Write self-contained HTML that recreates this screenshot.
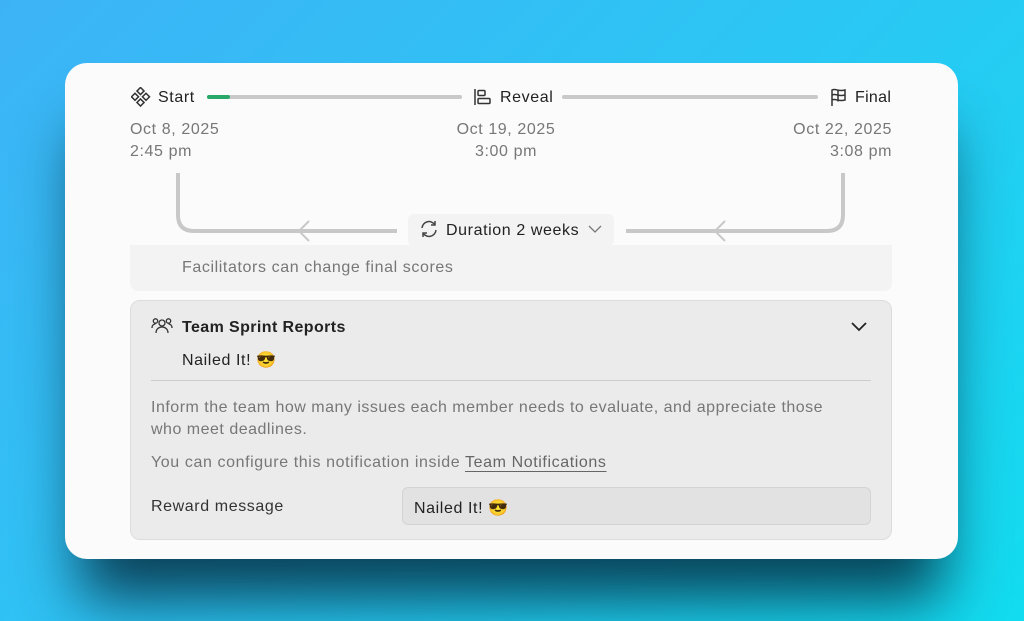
<!DOCTYPE html>
<html><head><style>
*{margin:0;padding:0;box-sizing:border-box}
body{width:1024px;height:621px;overflow:hidden;background:linear-gradient(135deg,#3db3f6 0%,#2cc6f4 50%,#12dcef 100%);font-family:"Liberation Sans",sans-serif;position:relative}
.card{position:absolute;left:65px;top:63px;width:893px;height:496px;background:#fbfbfb;border-radius:22px;box-shadow:0 55px 60px -15px rgba(5,50,70,0.9)}
.a{position:absolute;white-space:nowrap;letter-spacing:0.6px}
.lbl{font-size:16px;color:#222}
.date{font-size:16px;color:#777;line-height:22px}
.bar{position:absolute;height:4px;background:#c9c9c9;border-radius:2px}
</style></head><body>
<div class="card"></div>
<svg class="a" style="left:131px;top:87px" width="20" height="20" viewBox="0 0 20 20" fill="none" stroke="#333" stroke-width="1.5"><rect x="7" y="1.5" width="5" height="5" transform="rotate(45 9.5 4)"/><rect x="7" y="13" width="5" height="5" transform="rotate(45 9.5 15.5)"/><rect x="1.5" y="7.3" width="5" height="5" transform="rotate(45 4 9.8)"/><rect x="12.5" y="7.3" width="5" height="5" transform="rotate(45 15 9.8)"/></svg>
<div class="a lbl" style="left:158px;top:89px">Start</div>
<div class="bar" style="left:207px;top:95px;width:255px"></div>
<div class="bar" style="left:207px;top:95px;width:23px;background:#2aa86a"></div>
<svg class="a" style="left:473px;top:87px" width="20" height="20" viewBox="0 0 20 20" fill="none" stroke="#333" stroke-width="1.5"><path d="M2 2v16"/><rect x="5" y="3.5" width="7" height="5" rx="1"/><rect x="5" y="11.5" width="12" height="5" rx="1"/></svg>
<div class="a lbl" style="left:500px;top:89px">Reveal</div>
<div class="bar" style="left:562px;top:95px;width:256px"></div>
<svg class="a" style="left:829px;top:87px" width="20" height="20" viewBox="0 0 20 20" fill="none" stroke="#333" stroke-width="1.5"><path d="M3 19V3c4-2 6 2 13 0v10c-7 2-9-2-13 0"/><path d="M9 2.5v12M3 8c4-2 6 2 13 0"/></svg>
<div class="a lbl" style="left:855px;top:89px;letter-spacing:0.3px">Final</div>
<div class="a date" style="left:130px;top:119px">Oct 8, 2025<br>2:45 pm</div>
<div class="a date" style="left:446px;top:119px;text-align:center;width:120px">Oct 19, 2025<br>3:00 pm</div>
<div class="a date" style="left:760px;top:119px;text-align:right;width:132px;letter-spacing:0.6px">Oct 22, 2025<br>3:08 pm</div>
<svg class="a" style="left:0;top:0;letter-spacing:0" width="1024" height="621" fill="none" stroke="#c8c8c8" stroke-width="4"><path d="M178 173v42q0 16 16 16h203"/><path d="M626 231h201q16 0 16-16v-42"/><path d="M309 221l-10 10l10 10M725 221l-10 10l10 10" stroke-width="2"/></svg>
<div class="a" style="left:130px;top:245px;width:762px;height:46px;background:#f3f3f3;border-radius:0 0 8px 8px"></div>
<div class="a" style="left:408px;top:214px;width:206px;height:32px;background:#f3f3f3;border-radius:6px"></div>
<svg class="a" style="left:419px;top:219px" width="20" height="20" viewBox="0 0 20 20" fill="none" stroke="#444" stroke-width="1.5"><path d="M3 9a7 7 0 0 1 13-3M17 11a7 7 0 0 1-13 3"/><path d="M16 2v4h-4M4 18v-4h4"/></svg>
<div class="a lbl" style="left:446px;top:222px;color:#222">Duration 2 weeks</div>
<svg class="a" style="left:588px;top:224px" width="14" height="10" viewBox="0 0 14 10" fill="none" stroke="#777" stroke-width="1.3"><path d="M1 2l6 6l6-6"/></svg>
<div class="a" style="left:182px;top:259px;font-size:16px;color:#777">Facilitators can change final scores</div>
<div class="a" style="left:130px;top:300px;width:762px;height:240px;background:#ebebeb;border:1px solid #dcdcdc;border-radius:10px"></div>
<svg class="a" style="left:151px;top:317px" width="22" height="18" viewBox="0 0 22 18" fill="none" stroke="#333" stroke-width="1.3"><circle cx="11" cy="6" r="3"/><path d="M5 16c0-4 3-6 6-6s6 2 6 6"/><circle cx="4.5" cy="4" r="2.2"/><circle cx="17.5" cy="4" r="2.2"/><path d="M1 11c0-3 2-4 3.5-4M21 11c0-3-2-4-3.5-4"/></svg>
<div class="a" style="left:182px;top:319px;font-size:16px;font-weight:bold;color:#222;letter-spacing:0.4px">Team Sprint Reports</div>
<svg class="a" style="left:850px;top:321px" width="18" height="12" viewBox="0 0 18 12" fill="none" stroke="#222" stroke-width="1.8"><path d="M2 2l7 7l7-7"/></svg>
<div class="a" style="left:182px;top:350px;font-size:16px;color:#222">Nailed It! 😎</div>
<div class="a" style="left:151px;top:380px;width:720px;height:1px;background:#ccc"></div>
<div class="a" style="left:151px;top:397px;font-size:16px;color:#777;line-height:22px;white-space:normal;width:700px;letter-spacing:0.5px">Inform the team how many issues each member needs to evaluate, and appreciate those who meet deadlines.</div>
<div class="a" style="left:151px;top:454px;font-size:16px;color:#777">You can configure this notification inside <span style="color:#666;text-decoration:underline;text-underline-offset:4px">Team Notifications</span></div>
<div class="a" style="left:151px;top:498px;font-size:16px;color:#333">Reward message</div>
<div class="a" style="left:402px;top:487px;width:469px;height:38px;background:#e2e2e2;border:1px solid #d4d4d4;border-radius:6px"></div>
<div class="a" style="left:414px;top:498px;font-size:16px;color:#222">Nailed It! 😎</div>
</body></html>
